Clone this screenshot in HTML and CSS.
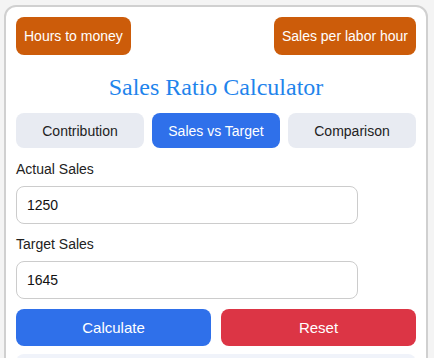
FILE: index.html
```html
<!DOCTYPE html>
<html lang="en">
<head>
  <meta charset="UTF-8">
  <meta name="viewport" content="width=device-width, initial-scale=1.0">
  <title>Sales Ratio Calculator</title>
  <link rel="stylesheet" href="styles.css">
</head>
<body>
  <div class="card">
    <div class="top-links">
      <button type="button" class="link-btn">Hours to money</button>
      <button type="button" class="link-btn">Sales per labor hour</button>
    </div>
    <h2>Sales Ratio Calculator</h2>
    <div class="tabs">
      <button type="button" class="tab">Contribution</button>
      <button type="button" class="tab active">Sales vs Target</button>
      <button type="button" class="tab">Comparison</button>
    </div>
    <div class="field">
      <label for="actual">Actual Sales</label>
      <input type="number" id="actual" value="1250">
    </div>
    <div class="field">
      <label for="target">Target Sales</label>
      <input type="number" id="target" value="1645">
    </div>
    <div class="actions">
      <button type="button" class="calc">Calculate</button>
      <button type="button" class="reset">Reset</button>
    </div>
    <div class="result" id="result"></div>
  </div>
</body>
</html>
```

FILE: styles.css
```css
body {
  font-family: Arial, "Liberation Sans", sans-serif;
  background-color: #f4f4f4;
  margin: 0;
  padding: 5px 6px 0 4px;
}
.card {
  background: #fff;
  border: 2px solid #d0d0d0;
  border-radius: 12px;
  padding: 10px 10px 20px;
}
.top-links {
  display: flex;
  justify-content: space-between;
}
.link-btn {
  background: #cc5c0a;
  color: #fff;
  border: none;
  border-radius: 8px;
  font-family: inherit;
  font-size: 14px;
  padding: 11px 8px;
  cursor: pointer;
}
h2 {
  font-family: "Liberation Serif", "Times New Roman", serif;
  font-weight: normal;
  font-size: 24px;
  line-height: 28px;
  color: #1f84ec;
  text-align: center;
  margin: 18px 0 12px;
}
.tabs {
  display: flex;
  gap: 8px;
  margin-bottom: 13px;
}
.tab {
  flex: 1;
  height: 35px;
  background: #e8ebf2;
  color: #222;
  border: none;
  border-radius: 8px;
  font-family: inherit;
  font-size: 14px;
  cursor: pointer;
}
.tab.active {
  background: #2f70ea;
  color: #fff;
}
.field {
  margin-bottom: 12px;
}
.field label {
  display: block;
  font-size: 14px;
  line-height: 16px;
  color: #222;
  margin-bottom: 9px;
}
.field input {
  width: 80%;
  padding: 10px;
  font-family: inherit;
  font-size: 14px;
  line-height: 16px;
  border: 1px solid #ccc;
  border-radius: 8px;
  color: #111;
}
.actions {
  display: flex;
  gap: 10px;
  margin-top: -2px;
}
.actions button {
  flex: 1;
  height: 37px;
  border: none;
  border-radius: 8px;
  color: #fff;
  font-family: inherit;
  font-size: 15px;
  cursor: pointer;
}
.calc {
  background: #2f70ea;
}
.reset {
  background: #dc3545;
}
.result {
  margin-top: 8px;
  height: 40px;
  background: #f0f3fa;
  border-radius: 8px;
}
```
